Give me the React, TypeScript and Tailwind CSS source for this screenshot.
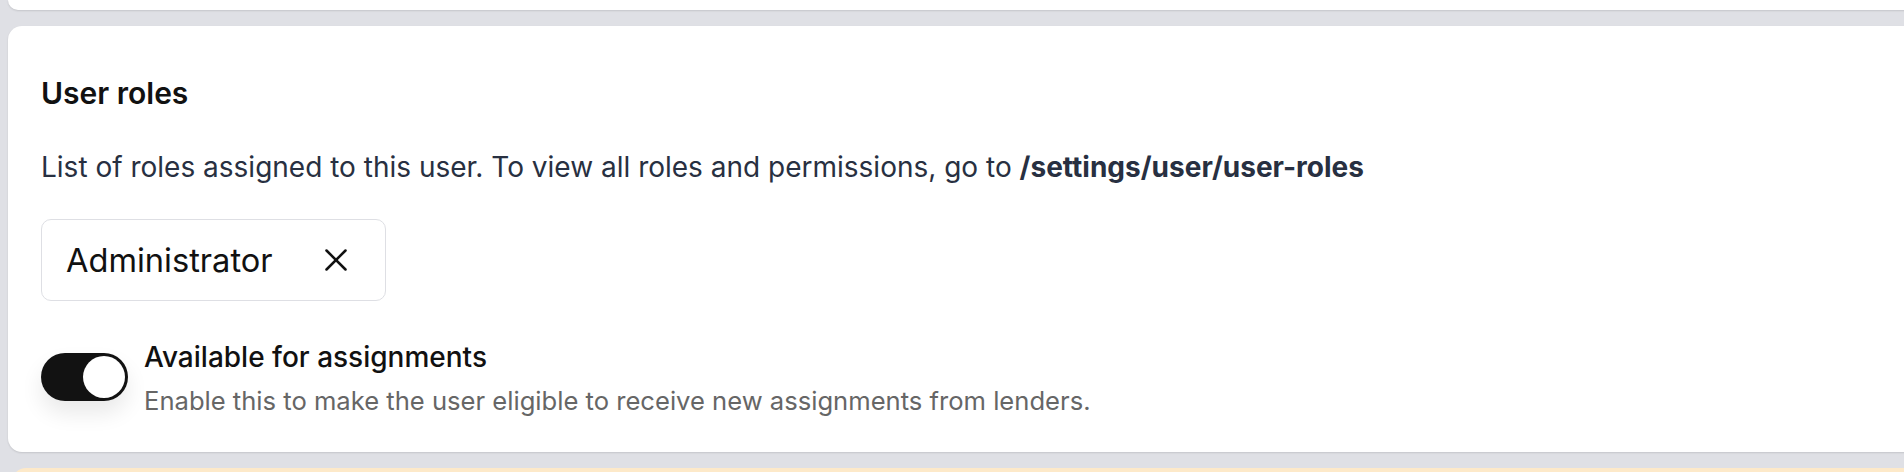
import { X } from "lucide-react";

export default function App() {
  return (
    <div
      className="h-[472px] w-full overflow-hidden bg-[#dfe0e5] pl-2"
      style={{ fontFamily: "Inter, 'Noto Sans', sans-serif" }}
    >
      {/* tail of the card above */}
      <div className="-mr-8 h-[10px] rounded-b-[14px] bg-white shadow-[0_1px_2px_rgba(0,0,0,0.12)]" />

      {/* User roles card */}
      <div className="-mr-8 mt-4 h-[426px] rounded-[14px] bg-white px-[33px] pt-[49px] shadow-[0_1px_2px_rgba(0,0,0,0.12)]">
        <h2 className="text-[30px] leading-[36px] font-semibold text-[#111111]">User roles</h2>
        <p className="mt-[39px] text-[28px] leading-[34px] text-[#283041]">
          List of roles assigned to this user. To view all roles and permissions, go to{" "}
          <span className="font-bold">/settings/user/user-roles</span>
        </p>

        <div className="mt-[35px] flex h-[82px] w-[345px] items-center justify-between rounded-[10px] border-[1.5px] border-[#dedfe4] pl-[24px] pr-[30px]">
          <span className="text-[32.6px] leading-none text-[#111111]">Administrator</span>
          <X size={38} strokeWidth={1.6} className="text-[#111111]" />
        </div>

        <div className="mt-[39px] flex items-start gap-[16px]">
          <button
            type="button"
            className="mt-[13px] flex h-[48px] w-[87px] shrink-0 items-center justify-end rounded-full bg-[#121212] p-[3px] shadow-[0_12px_22px_rgba(0,0,0,0.09)]"
          >
            <span className="h-[42px] w-[42px] rounded-full bg-white" />
          </button>
          <div className="flex flex-col">
            <span className="text-[28px] leading-[34px] font-medium text-[#111111]">
              Available for assignments
            </span>
            <span className="mt-[12px] text-[25.6px] leading-[30px] text-[#666666]">
              Enable this to make the user eligible to receive new assignments from lenders.
            </span>
          </div>
        </div>
      </div>

      {/* next card (warning) */}
      <div className="-mr-8 mt-4 ml-1 h-[40px] rounded-t-[14px] bg-[#fde9c9]" />
    </div>
  );
}
